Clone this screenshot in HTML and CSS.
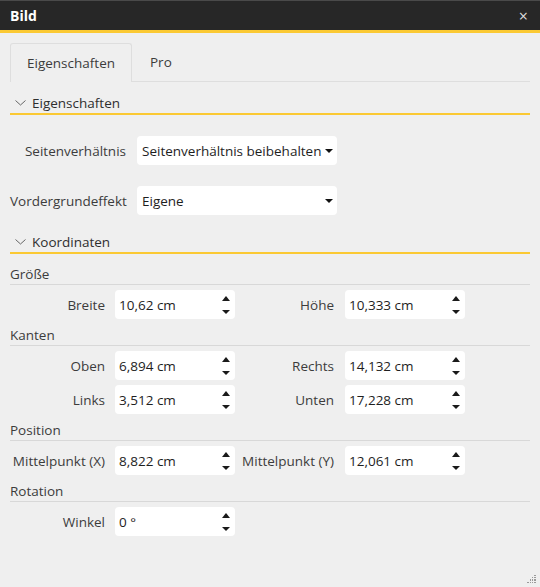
FILE: index.html
```html
<!DOCTYPE html>
<html lang="de">
<head>
<meta charset="utf-8">
<title>Bild</title>
<link rel="stylesheet" href="styles.css">
</head>
<body>
<div class="dialog">
  <div class="titlebar">
    <span class="title">Bild</span>
    <span class="close">×</span>
  </div>
  <div class="content">
    <div class="tabs">
      <div class="tab active">Eigenschaften</div>
      <div class="tab">Pro</div>
    </div>

    <div class="section first">
      <svg class="chev" width="11" height="6" viewBox="0 0 11 6"><path d="M0.5 0.5 L5.5 5 L10.5 0.5" fill="none" stroke="#666" stroke-width="1"/></svg>
      <span>Eigenschaften</span>
    </div>

    <div class="selrow first">
      <div class="sellabel">Seitenverhältnis</div>
      <div class="select"><span>Seitenverhältnis beibehalten</span><i class="caret"></i></div>
    </div>
    <div class="selrow">
      <div class="sellabel">Vordergrundeffekt</div>
      <div class="select"><span>Eigene</span><i class="caret"></i></div>
    </div>

    <div class="section second">
      <svg class="chev" width="11" height="6" viewBox="0 0 11 6"><path d="M0.5 0.5 L5.5 5 L10.5 0.5" fill="none" stroke="#666" stroke-width="1"/></svg>
      <span>Koordinaten</span>
    </div>

    <div class="group first">Größe</div>
    <div class="frow">
      <div class="flabel">Breite</div>
      <div class="num"><span>10,62 cm</span><i class="spin"><b class="up"></b><b class="down"></b></i></div>
      <div class="flabel l2">Höhe</div>
      <div class="num"><span>10,333 cm</span><i class="spin"><b class="up"></b><b class="down"></b></i></div>
    </div>

    <div class="group">Kanten</div>
    <div class="frow">
      <div class="flabel">Oben</div>
      <div class="num"><span>6,894 cm</span><i class="spin"><b class="up"></b><b class="down"></b></i></div>
      <div class="flabel l2">Rechts</div>
      <div class="num"><span>14,132 cm</span><i class="spin"><b class="up"></b><b class="down"></b></i></div>
    </div>
    <div class="frow">
      <div class="flabel">Links</div>
      <div class="num"><span>3,512 cm</span><i class="spin"><b class="up"></b><b class="down"></b></i></div>
      <div class="flabel l2">Unten</div>
      <div class="num"><span>17,228 cm</span><i class="spin"><b class="up"></b><b class="down"></b></i></div>
    </div>

    <div class="group">Position</div>
    <div class="frow">
      <div class="flabel">Mittelpunkt (X)</div>
      <div class="num"><span>8,822 cm</span><i class="spin"><b class="up"></b><b class="down"></b></i></div>
      <div class="flabel l2">Mittelpunkt (Y)</div>
      <div class="num"><span>12,061 cm</span><i class="spin"><b class="up"></b><b class="down"></b></i></div>
    </div>

    <div class="group">Rotation</div>
    <div class="frow">
      <div class="flabel">Winkel</div>
      <div class="num"><span>0 °</span><i class="spin"><b class="up"></b><b class="down"></b></i></div>
    </div>
  </div>
  <svg class="grip" width="10" height="9" viewBox="0 0 10 9">
    <g fill="#9a9a9a">
      <rect x="7" y="0" width="2" height="1"/>
      <rect x="5" y="2" width="1" height="1"/><rect x="7" y="2" width="2" height="1"/>
      <rect x="3" y="4" width="1" height="2"/><rect x="5" y="4" width="1" height="2"/><rect x="7" y="4" width="2" height="2"/>
      <rect x="0" y="7" width="2" height="1"/><rect x="3" y="7" width="1" height="1"/><rect x="5" y="7" width="1" height="1"/><rect x="7" y="7" width="2" height="1"/>
    </g>
  </svg>
</div>
</body>
</html>
```

FILE: styles.css
```css
html, body {
  margin: 0;
  padding: 0;
}
body {
  width: 540px;
  height: 587px;
  background: #efefef;
  font-family: "Open Sans", "Noto Sans", sans-serif;
  font-size: 13.5px;
  color: #3c3c3c;
  overflow: hidden;
}
.dialog {
  position: relative;
  width: 540px;
  height: 587px;
}
.titlebar {
  height: 29px;
  background: #272727;
  border-top: 1px solid #4a4a4a;
  border-bottom: 3px solid #fbc933;
  display: flex;
  align-items: center;
  justify-content: space-between;
  padding: 0 10px;
}
.title {
  color: #fff;
  font-weight: bold;
  font-size: 14px;
}
.close {
  color: #dcdcdc;
  font-size: 16px;
  line-height: 16px;
  margin-right: 2px;
}
.content {
  padding: 0 10px;
}
.tabs {
  margin-top: 10px;
  display: flex;
  border-bottom: 1px solid #dedede;
  height: 38px;
}
.tab {
  height: 38px;
  line-height: 38px;
  box-sizing: border-box;
  padding: 0 18px;
  color: #3c3c3c;
}
.tab.active {
  width: 122px;
  padding: 0;
  text-align: center;
  border: 1px solid #dedede;
  border-bottom: none;
  border-radius: 3px 3px 0 0;
  height: 39px;
  background: #efefef;
}
.section {
  display: flex;
  align-items: center;
  height: 20px;
  border-bottom: 2px solid #fbc933;
  color: #2e2e2e;
}
.section.first {
  margin-top: 11px;
}
.section.second {
  margin-top: 17px;
}
.chev {
  margin: 0 6px 0 5px;
}
.selrow {
  display: flex;
  align-items: center;
  margin-top: 21px;
}
.sellabel {
  width: 127px;
  box-sizing: border-box;
  padding-right: 11px;
  text-align: right;
}
.select {
  width: 200px;
  height: 29px;
  background: #fff;
  border-radius: 4px;
  display: flex;
  align-items: center;
  justify-content: space-between;
  padding: 0 5px;
  box-sizing: border-box;
  color: #1e1e1e;
}
.caret {
  width: 0;
  height: 0;
  border-left: 4px solid transparent;
  border-right: 4px solid transparent;
  border-top: 4px solid #111;
  margin-right: -1px;
}
.group {
  margin-top: 6px;
  height: 20px;
  line-height: 20px;
  border-bottom: 1px solid #d8d8d8;
}
.group.first {
  margin-top: 10px;
}
.frow {
  display: flex;
  align-items: center;
  margin-top: 5px;
}
.flabel {
  width: 105px;
  box-sizing: border-box;
  padding-right: 10px;
  text-align: right;
  white-space: nowrap;
}
.flabel.l2 {
  width: 110px;
  padding-right: 11px;
}
.num {
  width: 120px;
  height: 29px;
  background: #fff;
  border-radius: 4px;
  box-sizing: border-box;
  padding-left: 4px;
  display: flex;
  align-items: center;
  justify-content: space-between;
  color: #1e1e1e;
}
.spin {
  display: flex;
  flex-direction: column;
  justify-content: space-between;
  height: 18px;
  margin-right: 5px;
}
.spin b {
  display: block;
  width: 0;
  height: 0;
  border-left: 4px solid transparent;
  border-right: 4px solid transparent;
}
.spin .up {
  border-bottom: 5px solid #1a1a1a;
}
.spin .down {
  border-top: 4px solid #1a1a1a;
}
.grip {
  position: absolute;
  right: 3px;
  bottom: 3px;
}
```
